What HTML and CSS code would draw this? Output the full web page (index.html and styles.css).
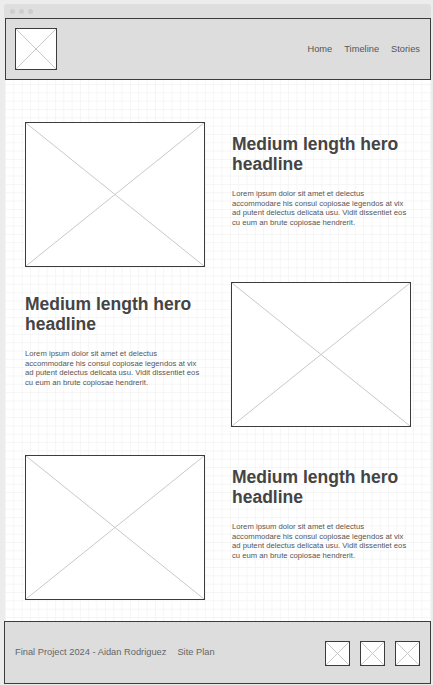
FILE: index.html
```html
<!doctype html>
<html lang="en">
    <head>
        <title>Final Project 2024 - Site Plan</title>
        <meta name="viewport" content="width=device-width, initial-scale=1"/>
        <link rel="stylesheet" href="styles.css">
    </head>
    <body>
        <div class="window">
            <div class="chrome">
                <span class="dot"></span><span class="dot"></span><span class="dot"></span>
            </div>
            <header class="site-header">
                <div class="ph ph--logo">
                    <svg viewBox="0 0 100 100" preserveAspectRatio="none"><line x1="0" y1="0" x2="100" y2="100"/><line x1="100" y1="0" x2="0" y2="100"/></svg>
                </div>
                <nav class="nav">
                    <a href="#">Home</a>
                    <a href="#">Timeline</a>
                    <a href="#">Stories</a>
                </nav>
            </header>
            <main class="content">
                <section class="feature">
                    <div class="ph ph--hero">
                        <svg viewBox="0 0 100 100" preserveAspectRatio="none"><line x1="0" y1="0" x2="100" y2="100"/><line x1="100" y1="0" x2="0" y2="100"/></svg>
                    </div>
                    <div class="feature-text">
                        <h2>Medium length hero headline</h2>
                        <p>Lorem ipsum dolor sit amet et delectus accommodare his consul copiosae legendos at vix ad putent delectus delicata usu. Vidit dissentiet eos cu eum an brute copiosae hendrerit.</p>
                    </div>
                </section>
                <section class="feature feature--second">
                    <div class="feature-text">
                        <h2>Medium length hero headline</h2>
                        <p>Lorem ipsum dolor sit amet et delectus accommodare his consul copiosae legendos at vix ad putent delectus delicata usu. Vidit dissentiet eos cu eum an brute copiosae hendrerit.</p>
                    </div>
                    <div class="ph ph--hero">
                        <svg viewBox="0 0 100 100" preserveAspectRatio="none"><line x1="0" y1="0" x2="100" y2="100"/><line x1="100" y1="0" x2="0" y2="100"/></svg>
                    </div>
                </section>
                <section class="feature feature--third">
                    <div class="ph ph--hero">
                        <svg viewBox="0 0 100 100" preserveAspectRatio="none"><line x1="0" y1="0" x2="100" y2="100"/><line x1="100" y1="0" x2="0" y2="100"/></svg>
                    </div>
                    <div class="feature-text">
                        <h2>Medium length hero headline</h2>
                        <p>Lorem ipsum dolor sit amet et delectus accommodare his consul copiosae legendos at vix ad putent delectus delicata usu. Vidit dissentiet eos cu eum an brute copiosae hendrerit.</p>
                    </div>
                </section>
            </main>
            <footer class="site-footer">
                <div class="footer-links">
                    <span>Final Project 2024 - Aidan Rodriguez</span>
                    <span>Site Plan</span>
                </div>
                <div class="socials">
                    <div class="ph ph--icon">
                        <svg viewBox="0 0 100 100" preserveAspectRatio="none"><line x1="0" y1="0" x2="100" y2="100"/><line x1="100" y1="0" x2="0" y2="100"/></svg>
                    </div>
                    <div class="ph ph--icon">
                        <svg viewBox="0 0 100 100" preserveAspectRatio="none"><line x1="0" y1="0" x2="100" y2="100"/><line x1="100" y1="0" x2="0" y2="100"/></svg>
                    </div>
                    <div class="ph ph--icon">
                        <svg viewBox="0 0 100 100" preserveAspectRatio="none"><line x1="0" y1="0" x2="100" y2="100"/><line x1="100" y1="0" x2="0" y2="100"/></svg>
                    </div>
                </div>
            </footer>
        </div>
    </body>
</html>
```

FILE: styles.css
```css
body {
    margin: 0;
    background-color: #ececec;
    font-family: "Liberation Sans", Arial, sans-serif;
}
.window {
    width: 427px;
    margin: 4px 0 0 4px;
    display: flex;
    flex-direction: column;
}
.chrome {
    height: 14px;
    background-color: #dedede;
    border-radius: 3px 3px 0 0;
    display: flex;
    align-items: center;
    gap: 4px;
    padding-left: 6px;
}
.chrome .dot {
    width: 5px;
    height: 5px;
    border-radius: 50%;
    background-color: #cdcdcd;
}
.site-header {
    height: 60px;
    margin-left: 1px;
    border: 1px solid #3c3c3c;
    background-color: #dddddd;
    display: flex;
    align-items: center;
    justify-content: space-between;
    padding: 0 10px 0 9px;
}
.nav {
    display: flex;
    gap: 12px;
}
.nav a {
    color: #555;
    font-size: 9.3px;
    text-decoration: none;
}
.ph {
    background-color: #fff;
    border: 1px solid #3c3c3c;
    box-sizing: border-box;
    flex-shrink: 0;
}
.ph svg {
    display: block;
    width: 100%;
    height: 100%;
}
.ph line {
    stroke: #c8c8c8;
    stroke-width: 1;
    vector-effect: non-scaling-stroke;
}
.ph--logo {
    width: 42px;
    height: 42px;
    border-width: 1.5px;
}
.ph--hero {
    width: 180px;
    height: 145px;
}
.ph--icon {
    width: 25px;
    height: 25px;
    border-width: 1.5px;
}
.content {
    margin-left: 1px;
    height: 541px;
    box-sizing: border-box;
    padding: 42px 20px 0 20px;
    background-color: #fff;
    background-image:
        linear-gradient(#f5f5f5 1px, transparent 1px),
        linear-gradient(90deg, #f5f5f5 1px, transparent 1px);
    background-size: 8.333px 8.333px;
    background-position: 0 4px;
}
.feature {
    display: flex;
    gap: 26px;
}
.feature--second {
    margin-top: 15px;
}
.feature--third {
    margin-top: 28px;
}
.feature-text {
    width: 180px;
    padding-top: 12px;
    padding-left: 1px;
}
.feature--second .feature-text {
    padding-left: 0;
}
.feature-text h2 {
    margin: 0;
    font-size: 17.5px;
    line-height: 20px;
    color: #444;
}
.feature-text p {
    margin: 15px 0 0;
    font-size: 7.7px;
    line-height: 9.5px;
    color: #555;
}
.site-footer {
    height: 61px;
    border: 1px solid #3c3c3c;
    background-color: #dddddd;
    display: flex;
    align-items: center;
    justify-content: space-between;
    padding: 0 10px 0 10px;
}
.footer-links {
    display: flex;
    gap: 11px;
    font-size: 9.3px;
    color: #666;
    padding-bottom: 2px;
}
.socials {
    display: flex;
    gap: 10px;
    padding-top: 2px;
}
```
